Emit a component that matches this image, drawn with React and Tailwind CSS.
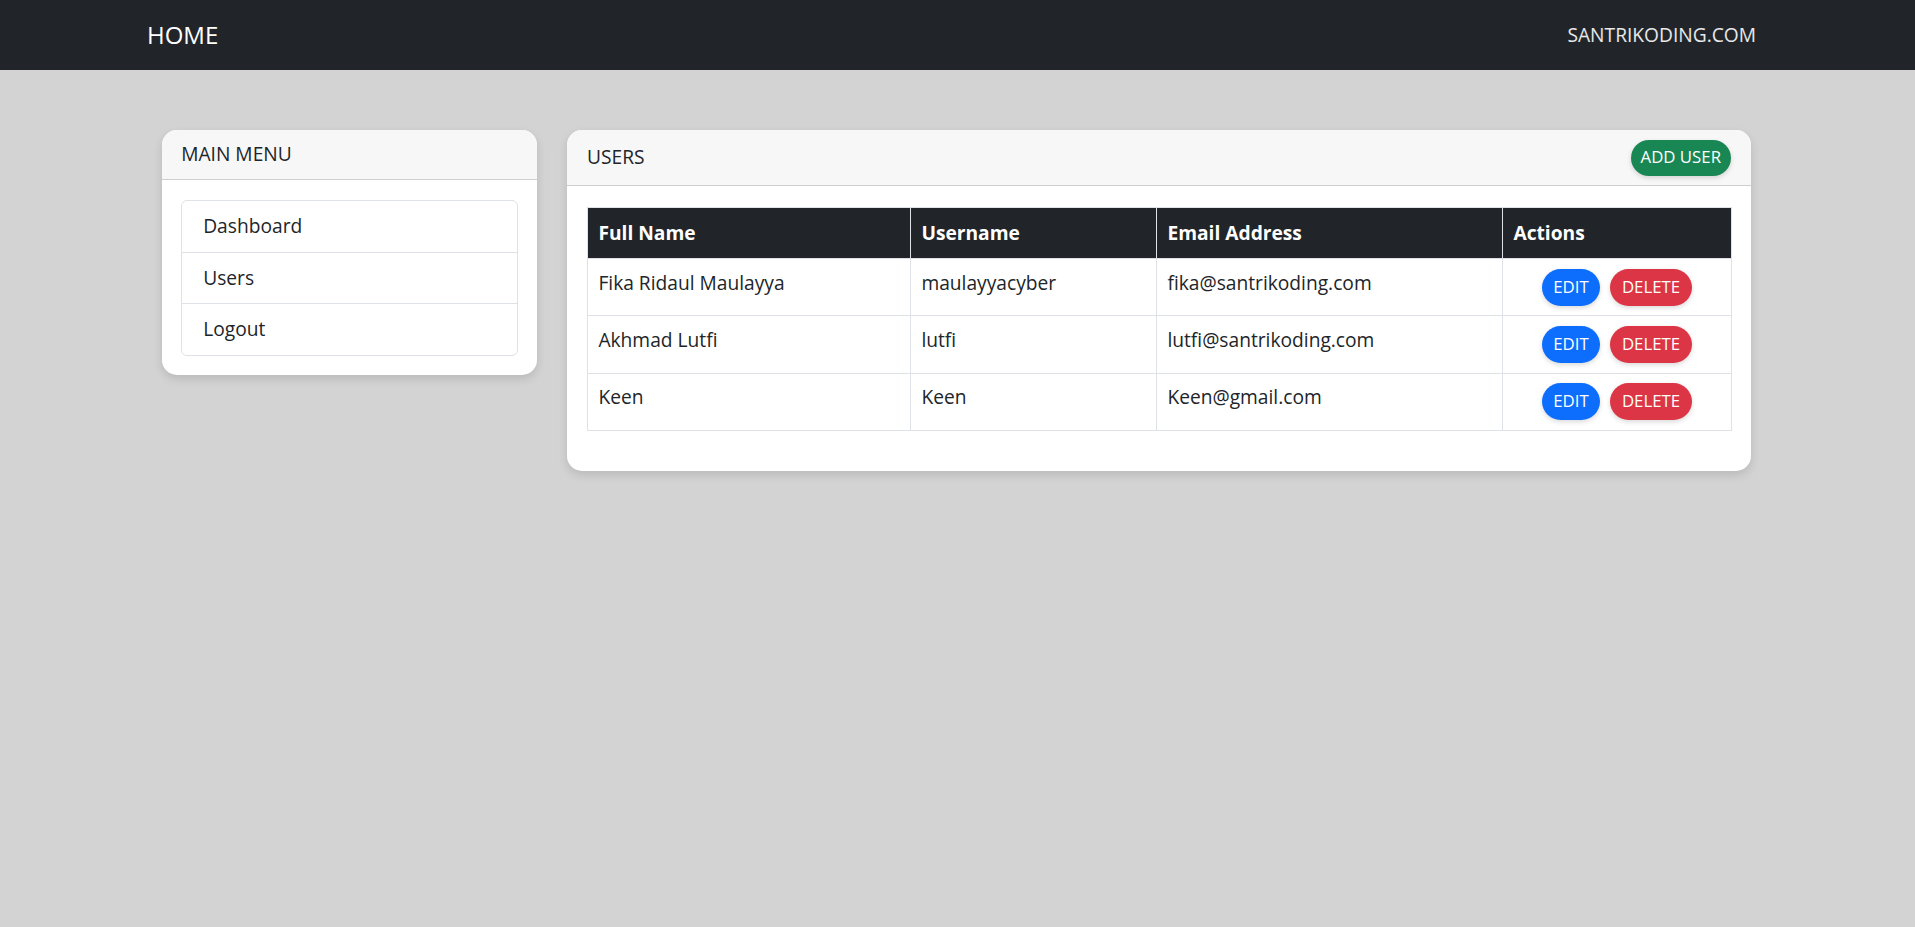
import React from 'react';

const users = [
  { id: 1, name: 'Fika Ridaul Maulayya', username: 'maulayyacyber', email: 'fika@santrikoding.com' },
  { id: 2, name: 'Akhmad Lutfi', username: 'lutfi', email: 'lutfi@santrikoding.com' },
  { id: 3, name: 'Keen', username: 'Keen', email: 'Keen@gmail.com' },
];

const menu = ['Dashboard', 'Users', 'Logout'];

function Navbar() {
  return (
    <nav className="h-[70px] bg-[#212529] flex items-center justify-between pl-[147px] pr-[159px]">
      <a className="text-[24px] leading-[36px] text-white">HOME</a>
      <a className="text-[19.2px] leading-[28.8px] text-white/90">SANTRIKODING.COM</a>
    </nav>
  );
}

function Sidebar() {
  return (
    <div className="w-[375px] self-start bg-white rounded-[15px] shadow-[0_4px_10px_rgba(0,0,0,0.12)] overflow-hidden">
      <div className="px-[19.2px] py-[10px] bg-[#f7f7f7] border-b border-[#cfcfcf] text-[#212529]">MAIN MENU</div>
      <div className="p-[19.2px] pt-[20px]">
        <ul className="border border-[#dee2e6] rounded-[6px]">
          {menu.map((m, i) => (
            <li key={m} className={`px-[21px] py-[11px] text-[#212529] ${i > 0 ? 'border-t border-[#dee2e6]' : ''}`}>
              {m}
            </li>
          ))}
        </ul>
      </div>
    </div>
  );
}

function UsersCard() {
  return (
    <div className="w-[1184px] self-start bg-white rounded-[15px] shadow-[0_4px_10px_rgba(0,0,0,0.12)] overflow-hidden">
      <div className="flex items-center justify-between px-[20px] py-[9.6px] bg-[#f7f7f7] border-b border-[#cfcfcf]">
        <span className="text-[#212529]">USERS</span>
        <button className="h-[36px] px-[10px] rounded-full bg-[#198754] text-white text-[16.8px] shadow-[0_2px_5px_rgba(0,0,0,0.15)]">
          ADD USER
        </button>
      </div>
      <div className="px-[20px] pt-[21px] pb-[40px]">
        <table className="w-[1144px] table-fixed border-collapse text-left text-[#212529]">
          <colgroup>
            <col className="w-[323px]" />
            <col className="w-[246px]" />
            <col className="w-[346px]" />
            <col className="w-[229px]" />
          </colgroup>
          <thead>
            <tr className="bg-[#212529] text-white">
              <th className="border border-[#dee2e6] px-[10.4px] py-[10.6px] font-bold">Full Name</th>
              <th className="border border-[#dee2e6] px-[10.4px] py-[10.6px] font-bold">Username</th>
              <th className="border border-[#dee2e6] px-[10.4px] py-[10.6px] font-bold">Email Address</th>
              <th className="border border-[#dee2e6] px-[10.4px] py-[10.6px] font-bold">Actions</th>
            </tr>
          </thead>
          <tbody>
            {users.map(u => (
              <tr key={u.id} className="align-top">
                <td className="border border-[#dee2e6] px-[10.4px] py-[9.6px]">{u.name}</td>
                <td className="border border-[#dee2e6] px-[10.4px] py-[9.6px]">{u.username}</td>
                <td className="border border-[#dee2e6] px-[10.4px] py-[9.6px]">{u.email}</td>
                <td className="border border-[#dee2e6] px-[10.4px] py-[9.6px] text-center">
                  <div className="inline-flex gap-[10px]">
                    <button className="h-[37px] w-[58px] rounded-full bg-[#0d6efd] text-white text-[16.8px] shadow-[0_2px_5px_rgba(0,0,0,0.15)]">EDIT</button>
                    <button className="h-[37px] w-[82px] rounded-full bg-[#dc3545] text-white text-[16.8px] shadow-[0_2px_5px_rgba(0,0,0,0.15)]">DELETE</button>
                  </div>
                </td>
              </tr>
            ))}
          </tbody>
        </table>
      </div>
    </div>
  );
}

export default function App() {
  return (
    <div className="min-h-screen bg-[#d3d3d3] font-['Open_Sans',sans-serif] text-[19.2px] leading-[28.8px]">
      <Navbar />
      <main className="flex gap-[30px] pl-[162px] pt-[60px]">
        <Sidebar />
        <UsersCard />
      </main>
    </div>
  );
}
